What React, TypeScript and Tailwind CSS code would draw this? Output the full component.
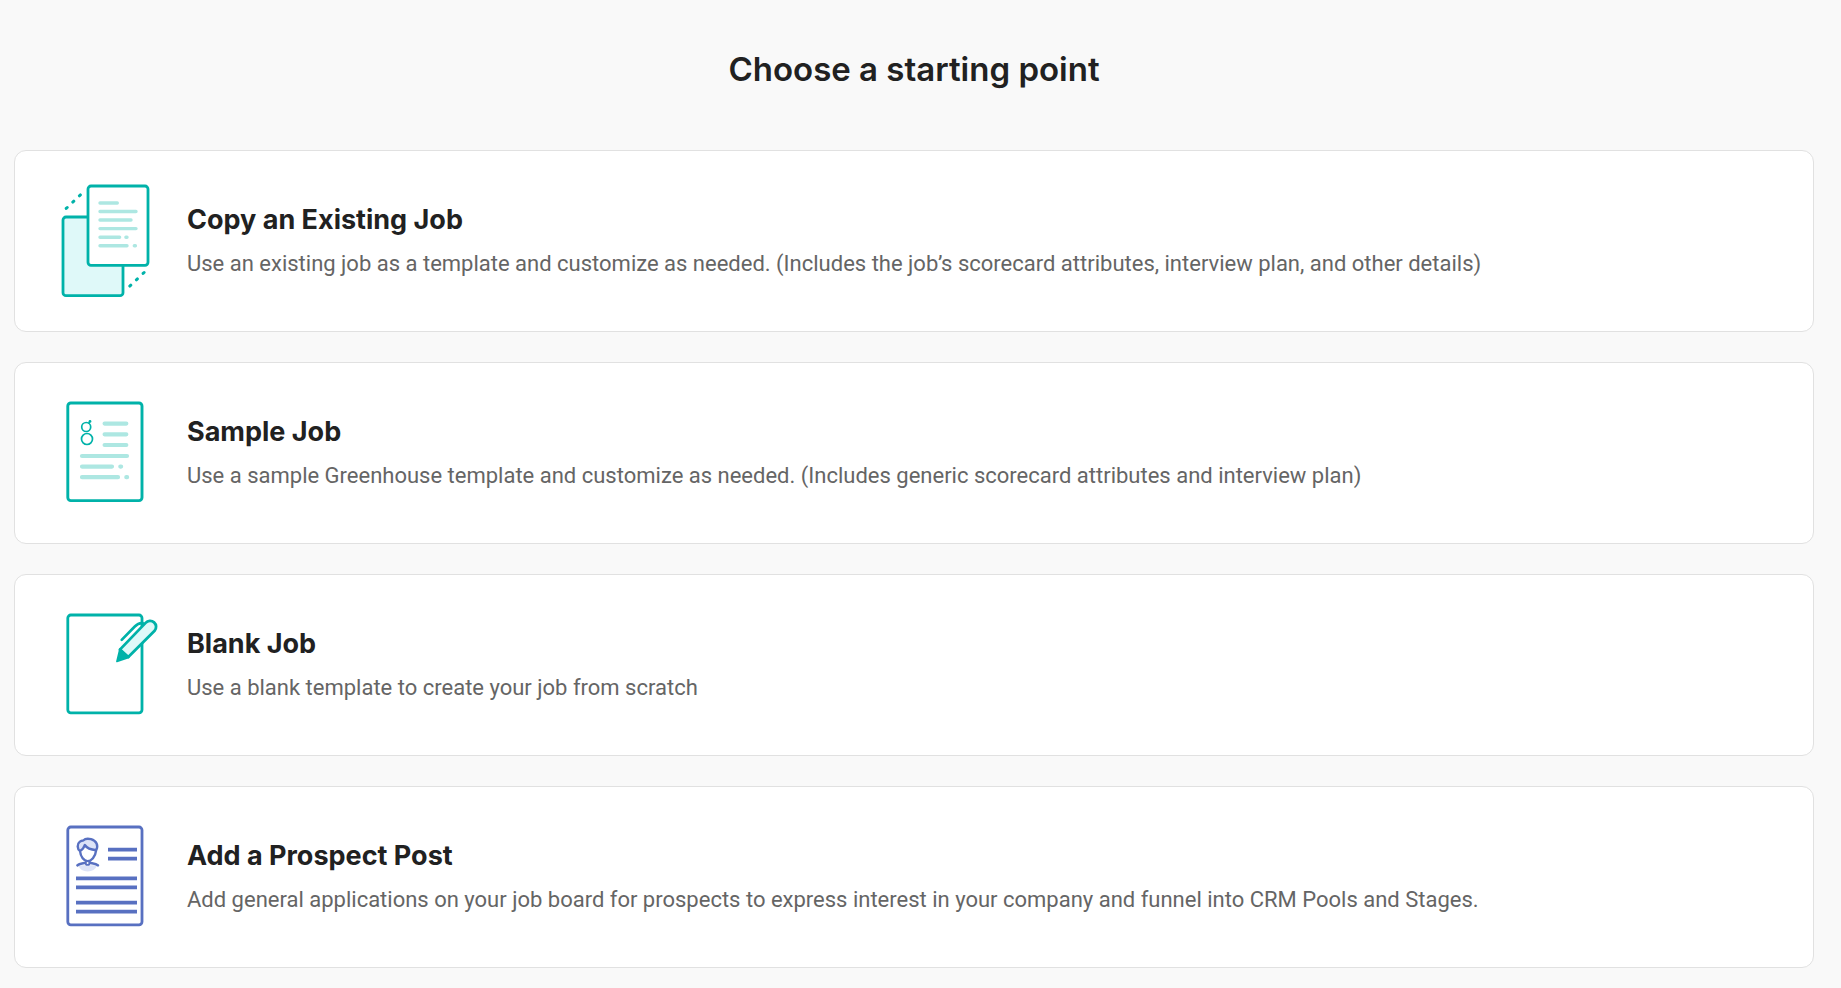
import type { ReactNode } from "react";

const TEAL = "#00b2a9";
const TEAL_SOFT = "#ade7e2";
const TEAL_PALE = "#dff9f9";
const BLUE = "#5870c1";
const BLUE_PALE = "#dde3f7";

function Illustration({ children }: { children: ReactNode }) {
  return (
    <svg
      className="h-[140px] w-[120px] shrink-0"
      viewBox="0 0 120 140"
      fill="none"
      strokeLinecap="round"
      strokeLinejoin="round"
      aria-hidden="true"
    >
      {children}
    </svg>
  );
}

function CopyIllustration() {
  return (
    <Illustration>
      <rect x="13" y="46" width="60" height="78.7" rx="3" fill={TEAL_PALE} stroke={TEAL} strokeWidth="2.8" />
      <rect x="38" y="15" width="60" height="79.3" rx="3" fill="#fff" stroke={TEAL} strokeWidth="2.8" />
      <path
        d="M50 32H67.3M50 40.5H86M50 49H81M50 57.6H86M50 66.2H69.6M75.9 66.2H77M50 74.7H77M84.3 74.7H85.4"
        stroke={TEAL_SOFT}
        strokeWidth="3.4"
      />
      <path
        d="M16.2 37.4l1-.9M22.8 31.1l1-.9M29.4 24.8l1-.9M79.8 115.1l1-.9M86.4 108.8l1-.9M93.1 102.4l1-.9"
        stroke={TEAL}
        strokeWidth="3"
      />
    </Illustration>
  );
}

function SampleIllustration() {
  return (
    <Illustration>
      <rect x="17.8" y="20" width="74.2" height="97.6" rx="3" stroke={TEAL} strokeWidth="2.9" />
      <path
        d="M54.6 40.6H76.3M54.6 51.3H76.3M54.6 62H76.3M32 73H77M32 83.6H62M70.3 83.6h.8M32 94.2H68M76.3 94.2h.8"
        stroke={TEAL_SOFT}
        strokeWidth="4.2"
      />
      <circle cx="36.2" cy="44" r="4.5" stroke={TEAL} strokeWidth="1.7" />
      <circle cx="37" cy="56" r="5.5" stroke={TEAL} strokeWidth="1.7" />
      <path d="M38.8 40L40 38.4" stroke={TEAL} strokeWidth="1.4" />
      <circle cx="40" cy="38.4" r="1.4" fill={TEAL} />
    </Illustration>
  );
}

function BlankIllustration() {
  return (
    <Illustration>
      <rect x="17.8" y="20" width="74.2" height="97.8" rx="3" stroke={TEAL} strokeWidth="2.8" />
      <path
        d="M69.9 54.6L95.6 27.9A5.4 5.4 0 0 1 104.6 35.8L78.3 62Z"
        fill={TEAL_PALE}
        stroke={TEAL}
        strokeWidth="2.8"
      />
      <path d="M69.9 53.9L78.8 62.4L66.9 66.5Z" fill={TEAL} stroke={TEAL} strokeWidth="1.6" />
      <path d="M71.7 44.9L84.8 31.5Q88.2 27.9 92 28.1L94 28.7" stroke={TEAL} strokeWidth="2.7" />
    </Illustration>
  );
}

function ProspectIllustration() {
  return (
    <Illustration>
      <rect x="17.8" y="20" width="74.2" height="97.8" rx="3" stroke={BLUE} strokeWidth="2.8" />
      <path
        d="M58 42.6H87M58 51.6H87M26 71.4H87M26 80.4H87M26 95.7H87M26 104.7H87"
        stroke={BLUE}
        strokeWidth="3.8"
        strokeLinecap="butt"
      />
      <path d="M28 58.2H47.4Q44.5 64.4 37.6 64.4Q30.8 64.4 28 58.2Z" fill={BLUE_PALE} />
      <path
        d="M30 44.4C27.1 42.4 26.9 37.4 29.6 35.3C30.8 34.3 32.2 33.9 33.2 33.9C35 32.1 38.2 31.8 41 32.6C46.6 34.2 48.6 39 46.2 43.6C41.6 43.2 37.2 42 34.8 38.4C34 41 32.2 43.2 30 44.4Z"
        fill={BLUE_PALE}
      />
      <path
        d="M30 44C27.1 42 26.9 37 29.6 34.9C30.8 33.9 32.2 33.5 33.2 33.5C35 31.7 38.2 31.4 41 32.2C46.6 33.8 48.6 38.6 46.2 43.2C41.6 42.8 37.2 41.6 34.8 38C34 40.6 32.2 42.8 30 44C30.6 50 34 54.2 37.6 54.2C41.2 54.2 45.4 50 46.2 43.2"
        stroke={BLUE}
        strokeWidth="2.4"
      />
      <path d="M27.4 58.4C29.4 56 32.6 56.4 35.4 55.8M48 58.4C45.8 56 42.4 56.4 39.8 55.8" stroke={BLUE} strokeWidth="2.5" />
      <circle cx="37.6" cy="56" r="1.9" fill="#fff" stroke={BLUE} strokeWidth="1.9" />
    </Illustration>
  );
}

const options = [
  {
    title: "Copy an Existing Job",
    description:
      "Use an existing job as a template and customize as needed. (Includes the job’s scorecard attributes, interview plan, and other details)",
    art: <CopyIllustration />,
  },
  {
    title: "Sample Job",
    description:
      "Use a sample Greenhouse template and customize as needed. (Includes generic scorecard attributes and interview plan)",
    art: <SampleIllustration />,
  },
  {
    title: "Blank Job",
    description: "Use a blank template to create your job from scratch",
    art: <BlankIllustration />,
  },
  {
    title: "Add a Prospect Post",
    description:
      "Add general applications on your job board for prospects to express interest in your company and funnel into CRM Pools and Stages.",
    art: <ProspectIllustration />,
  },
];

export default function App() {
  return (
    <main className="min-h-screen bg-[#f9f9f9] pt-12 pr-[27px] pb-5 pl-[14px] font-['Inter',sans-serif] text-[#212121]">
      <h1 className="mb-[60px] text-center text-[33px] leading-[42px] font-semibold">Choose a starting point</h1>
      <ul className="flex flex-col gap-[30px]">
        {options.map((option) => (
          <li key={option.title}>
            <a
              href="#"
              className="flex items-center gap-[17px] rounded-xl border border-[#e1e1e1] bg-white py-5 pr-9 pl-[35px]"
            >
              {option.art}
              <div className="min-w-0">
                <h2 className="text-[27px] leading-9 font-bold">{option.title}</h2>
                <p className="mt-[10px] font-['Roboto',sans-serif] text-[22px] leading-8 text-[#656565]">
                  {option.description}
                </p>
              </div>
            </a>
          </li>
        ))}
      </ul>
    </main>
  );
}
